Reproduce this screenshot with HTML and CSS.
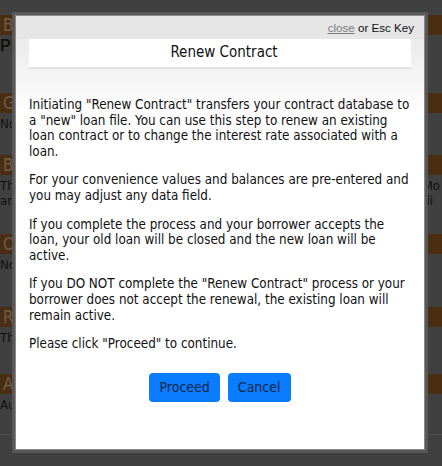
FILE: index.html
```html
<!DOCTYPE html>
<html>
<head>
<meta charset="utf-8">
<link rel="stylesheet" href="styles.css">
</head>
<body>
<div class="page">
  <section class="sec sec-1">
    <div class="bar"><span>B</span></div>
    <div class="row"><b class="big">Plan</b><span></span></div>
  </section>
  <section class="sec sec-2">
    <div class="bar"><span>G</span></div>
    <div class="row"><span>None</span><span></span></div>
  </section>
  <section class="sec sec-3">
    <div class="bar"><span>B</span></div>
    <div class="row"><span>The<br>and</span><span class="rt">Mo<br>&nbsp;li</span></div>
  </section>
  <section class="sec sec-4">
    <div class="bar"><span>O</span></div>
    <div class="row"><span>None</span><span></span></div>
  </section>
  <section class="sec sec-5">
    <div class="bar"><span>R</span></div>
    <div class="row"><span>The</span><span></span></div>
  </section>
  <section class="sec sec-6">
    <div class="bar"><span>A</span></div>
    <div class="row"><span>Auto</span><span></span></div>
  </section>
</div>

<div class="modal">
  <div class="modal-inner">
    <div class="modal-head">
      <a class="close" href="#">close</a>&nbsp;or Esc Key
    </div>
    <div class="modal-body">
      <h1 class="title">Renew Contract</h1>
      <p>Initiating "Renew Contract" transfers your contract database to a "new" loan file. You can use this step to renew an existing loan contract or to change the interest rate associated with a loan.</p>
      <p>For your convenience values and balances are pre-entered and you may adjust any data field.</p>
      <p>If you complete the process and your borrower accepts the loan, your old loan will be closed and the new loan will be active.</p>
      <p>If you DO NOT complete the "Renew Contract" process or your borrower does not accept the renewal, the existing loan will remain active.</p>
      <p>Please click "Proceed" to continue.</p>
      <div class="actions">
        <button class="btn">Proceed</button>
        <button class="btn">Cancel</button>
      </div>
    </div>
  </div>
</div>
</body>
</html>
```

FILE: styles.css
```css
html, body {
  margin: 0;
  padding: 0;
  background: #404040;
  font-family: "DejaVu Sans Condensed", "DejaVu Sans", sans-serif;
  overflow: hidden;
}

.page {
  padding-top: 15px;
  color: #111;
  font-size: 13px;
}

.sec { display: flex; flex-direction: column; }
.sec-1 { height: 78px; }
.sec-2 { height: 62px; }
.sec-3 { height: 79px; }
.sec-4 { height: 73px; }
.sec-5 { height: 67px; }
.sec-6 { height: 60px; border-bottom: 1px solid #4c4c4c; }

.bar {
  height: 20px;
  background: #4a2e12;
  color: #6f5d4d;
  font-size: 17px;
  line-height: 20px;
  display: flex;
  padding: 0 3px;
}

.row {
  display: flex;
  justify-content: space-between;
  line-height: 15px;
  padding-top: 3px;
}

.big { font-family: "Liberation Sans", sans-serif; font-size: 16px; }
.rt { padding-right: 2px; }

.modal {
  position: fixed;
  left: 12px;
  top: 12px;
  width: 416px;
  height: 441px;
  box-sizing: border-box;
  border: 3px solid #585858;
}

.modal-inner {
  height: 100%;
  box-sizing: border-box;
  border: 1px solid #8a8a8a;
  background: #fff;
  display: flex;
  flex-direction: column;
}

.modal-head {
  height: 23px;
  background: #e6e6e6;
  font-family: "Liberation Sans", Arial, sans-serif;
  font-size: 11.6px;
  line-height: 23px;
  text-align: right;
  padding-right: 10px;
  color: #111;
}

.close { color: #7a7a7a; text-decoration: underline; }

.modal-body {
  flex: 1;
  padding: 0 13px;
  background: linear-gradient(#ebebeb 0, #ffffff 75px);
  font-size: 13.33px;
  line-height: 15.6px;
  color: #111;
}

.title {
  margin: 0 0 28px;
  height: 28px;
  background: #fff;
  border-bottom: 2px solid #e3e3e3;
  font-size: 15px;
  font-weight: normal;
  line-height: 27px;
  text-align: center;
  padding-left: 8px;
}

.modal-body p { margin: 0 0 13px; }

.actions {
  display: flex;
  justify-content: center;
  gap: 8px;
  margin-top: 21px;
}

.btn {
  height: 29px;
  padding: 0 10px;
  border: 0;
  border-radius: 4px;
  background: #0a7cff;
  color: #0e2745;
  font-family: "DejaVu Sans Condensed", "DejaVu Sans", sans-serif;
  font-size: 14px;
}
```
